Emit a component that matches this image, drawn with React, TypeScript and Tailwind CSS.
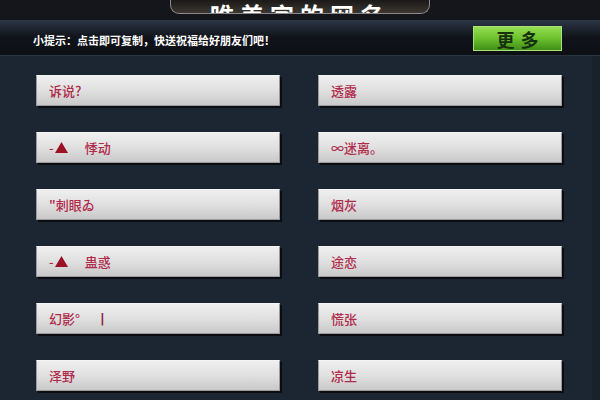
import React from 'react'

const font = { fontFamily: '"Noto Sans CJK SC", "Noto Sans", sans-serif' }

type Item = { pre?: string; tri?: boolean; text: string; gap?: boolean }

const left: Item[] = [
  { text: '诉说?' },
  { pre: '-', tri: true, text: '悸动' },
  { text: '"刺眼ゐ' },
  { pre: '-', tri: true, text: '蛊惑' },
  { text: '幻影°', gap: true },
  { text: '泽野' },
]

const right: Item[] = [
  { text: '透露' },
  { text: '∞迷离。' },
  { text: '烟灰' },
  { text: '途恋' },
  { text: '慌张' },
  { text: '凉生' },
]

function NameCard({ item }: { item: Item }) {
  return (
    <div className="h-[31px] flex items-center pl-3 bg-gradient-to-b from-[#efefef] via-[#e0e0e0] to-[#c9c9c9] border border-[#9a9a9a] border-t-[#f4f4f4] shadow-[2px_2px_0_#0b0d10] text-[13px] font-medium text-[#b02a4a]">
      {item.pre && <span>{item.pre}</span>}
      {item.tri && (
        <svg width="13" height="11" viewBox="0 0 13 11" className="ml-[1px] mr-[17px]">
          <polygon points="6.5,0 13,11 0,11" fill="#9a1224" />
        </svg>
      )}
      <span>{item.text}</span>
      {item.gap && (
        <span className="ml-[20px] text-[13px] font-bold text-[#8e2038]" style={{ fontFamily: '"DejaVu Sans", sans-serif' }}>
          |
        </span>
      )}
    </div>
  )
}

export default function App() {
  return (
    <div className="w-[600px] h-[400px] overflow-hidden flex flex-col bg-[#1c2633]" style={font}>
      {/* top title bar */}
      <div className="h-[20px] bg-[#14161c] flex justify-center">
        <div className="w-[260px] h-[16px] -mt-[2px] rounded-b-[9px] border border-t-0 border-[#8a8a8a] bg-gradient-to-b from-[#151515] to-[#3d3731] overflow-hidden flex items-end justify-center">
          <span className="text-white text-[24px] font-bold leading-none -mb-[14px] tracking-[6px]">唯美字的网名</span>
        </div>
      </div>

      {/* tip band */}
      <div className="h-[36px] flex items-center justify-between pl-[33px] pr-[38px] bg-gradient-to-b from-[#2c3645] via-[#10141a] to-[#0c0f14] border-b border-[#2a3440]">
        <span className="text-white text-[11px] font-bold pt-[6px]">小提示：点击即可复制，快送祝福给好朋友们吧！</span>
        <div className="w-[89px] h-[25px] mt-[2px] flex items-center justify-center border border-[#a9e27a] bg-gradient-to-b from-[#95de52] via-[#6cc02e] to-[#3f8f17]">
          <span className="text-[#17310d] text-[18px] font-bold tracking-[6px] pl-[6px] leading-none">更多</span>
        </div>
      </div>

      {/* names */}
      <div className="flex-1 flex">
        <div className="flex-1 grid grid-cols-[244px_244px] gap-x-[38px] gap-y-[26px] pl-[36px] pt-[19px] content-start">
          {left.map((l, i) => (
            <React.Fragment key={i}>
              <NameCard item={l} />
              <NameCard item={right[i]} />
            </React.Fragment>
          ))}
        </div>
        <div className="w-[8px] bg-[#19212b]" />
      </div>
    </div>
  )
}
